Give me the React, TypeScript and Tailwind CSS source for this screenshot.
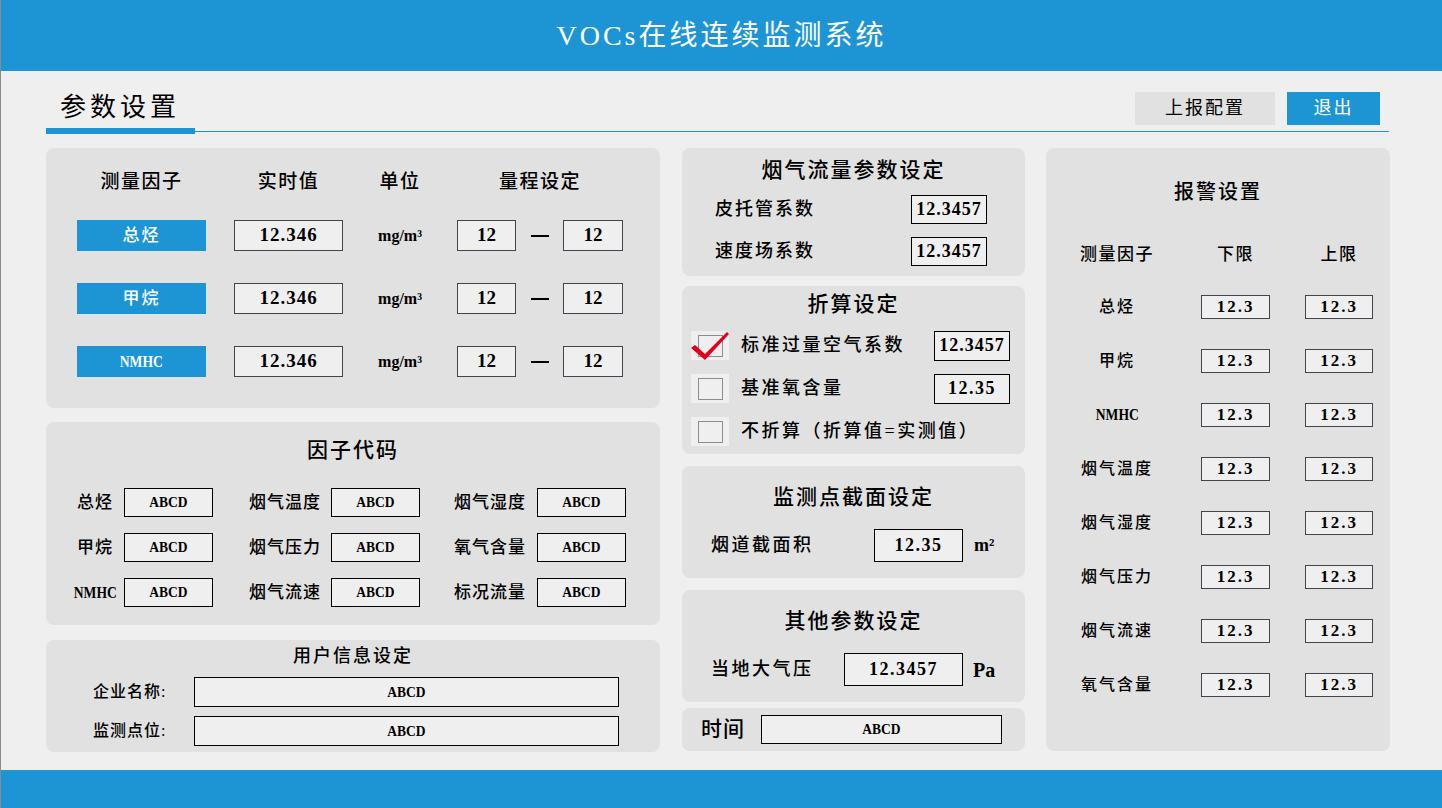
import React from "react";

const BLUE = "bg-[#1d95d4]";

function NumBox({ children, className = "" }: { children: React.ReactNode; className?: string }) {
  return (
    <div
      className={`flex items-center justify-center border border-[#43434f] bg-[#efefef] font-bold ${className}`}
    >
      {children}
    </div>
  );
}

function CodeBox({ className = "", children = "ABCD" }: { className?: string; children?: React.ReactNode }) {
  return (
    <div
      className={`flex items-center justify-center border border-black bg-[#efefef] text-[15px] font-bold tracking-normal ${className}`}
    >
      <span className="inline-block scale-x-90">{children}</span>
    </div>
  );
}

function Panel({ className = "", children }: { className?: string; children: React.ReactNode }) {
  return <div className={`rounded-[8px] bg-[#e1e1e1] ${className}`}>{children}</div>;
}

function CheckBox({ checked = false }: { checked?: boolean }) {
  return (
    <div className="relative flex h-[29px] w-[38px] flex-none items-center justify-center bg-[#efefef]">
      <div className="h-[22px] w-[25px] border border-[#8c8c8c] bg-[#efefef]" />
      {checked && (
        <svg className="absolute left-0 top-0 overflow-visible" width="40" height="30" viewBox="0 0 40 30">
          <polygon points="0,17 4,14 14,23 36,1 38,3 14,29" fill="#e3001b" />
        </svg>
      )}
    </div>
  );
}

const measureRows = ["总烃", "甲烷", "NMHC"];

const codeRows = [
  ["总烃", "烟气温度", "烟气湿度"],
  ["甲烷", "烟气压力", "氧气含量"],
  ["NMHC", "烟气流速", "标况流量"],
];

const alarmRows = ["总烃", "甲烷", "NMHC", "烟气温度", "烟气湿度", "烟气压力", "烟气流速", "氧气含量"];

function Label({ text, className = "" }: { text: string; className?: string }) {
  const latin = /^[A-Z]+$/.test(text);
  return (
    <div className={className}>
      {latin ? (
        <span className="inline-block scale-x-85 text-[16px] font-bold tracking-normal">{text}</span>
      ) : (
        text
      )}
    </div>
  );
}

export default function App() {
  return (
    <div className="flex h-[808px] w-full flex-col border-l border-[#8a8a8a] bg-[#efefef] font-['Liberation_Serif','Noto_Sans_CJK_SC',serif] font-medium text-black">
      {/* header */}
      <div className={`flex h-[71px] items-center justify-center ${BLUE} text-[28px] font-normal tracking-[3px] text-white`}>
        VOCs在线连续监测系统
      </div>

      <div className="flex-1">
        {/* page title */}
        <div className="ml-[45px] mr-[53px] pt-[21px]">
          <div className="flex h-[36px] items-start justify-between">
            <div className="pl-[14px] text-[26px] font-normal leading-[32px] tracking-[4px]">参数设置</div>
            <div className="mr-[9px] flex gap-[12px]">
              <button className="h-[33px] w-[140px] bg-[#e1e1e1] text-[18px] font-normal tracking-[2px]">上报配置</button>
              <button className={`h-[33px] w-[93px] ${BLUE} text-[18px] font-normal tracking-[2px] text-white`}>退出</button>
            </div>
          </div>
          <div className="flex h-[6px]">
            <div className={`w-[149px] ${BLUE}`} />
            <div className={`mt-[3px] h-px flex-1 ${BLUE}`} />
          </div>
        </div>

        {/* content */}
        <div className="ml-[45px] mt-[14px] flex">
          {/* left column */}
          <div className="flex w-[614px] flex-col">
            <Panel className="h-[260px] pl-[31px] pt-[22px]">
              <div className="flex h-[24px] items-center text-[19px] tracking-[1.5px]">
                <div className="w-[129px] text-center">测量因子</div>
                <div className="ml-[28px] w-[109px] text-center">实时值</div>
                <div className="w-[114px] text-center">单位</div>
                <div className="w-[166px] text-center">量程设定</div>
              </div>
              <div className="mt-[26px] flex flex-col gap-[32px]">
                {measureRows.map((name) => (
                  <div key={name} className="flex h-[31px] items-center">
                    <Label
                      text={name}
                      className={`flex h-full w-[129px] items-center justify-center ${BLUE} text-[17px] tracking-[2px] text-white`}
                    />
                    <NumBox className="ml-[28px] h-full w-[109px] text-[19px] tracking-[1px]">12.346</NumBox>
                    <div className="w-[114px] text-center text-[16px] font-bold">mg/m³</div>
                    <NumBox className="h-full w-[59px] text-[19px]">12</NumBox>
                    <div className="flex w-[47px] justify-center">
                      <div className="h-[2px] w-[18px] bg-black" />
                    </div>
                    <NumBox className="h-full w-[60px] text-[19px]">12</NumBox>
                  </div>
                ))}
              </div>
            </Panel>

            <Panel className="mt-[14px] h-[203px] pt-[13px]">
              <div className="h-[30px] text-center text-[21px] leading-[30px] tracking-[2px]">因子代码</div>
              <div className="mt-[23px] flex flex-col gap-[16px]">
                {codeRows.map((row) => (
                  <div key={row[0]} className="flex h-[29px] items-center pl-[24px] text-[17px] tracking-[1px]">
                    <Label text={row[0]} className="w-[50px] text-center" />
                    <CodeBox className="ml-[4px] h-full w-[89px]" />
                    <div className="ml-[32px] w-[80px] text-center">{row[1]}</div>
                    <CodeBox className="ml-[6px] h-full w-[89px]" />
                    <div className="ml-[30px] w-[80px] text-center">{row[2]}</div>
                    <CodeBox className="ml-[7px] h-full w-[89px]" />
                  </div>
                ))}
              </div>
            </Panel>

            <Panel className="mt-[15px] h-[112px] pt-[3px]">
              <div className="h-[26px] text-center text-[18px] leading-[26px] tracking-[2px]">用户信息设定</div>
              <div className="mt-[8px] flex flex-col gap-[9px]">
                {["企业名称:", "监测点位:"].map((l) => (
                  <div key={l} className="flex h-[30px] items-center pl-[47px]">
                    <div className="w-[101px] text-[16px] tracking-[1px]">{l}</div>
                    <CodeBox className="h-full w-[425px]" />
                  </div>
                ))}
              </div>
            </Panel>
          </div>

          {/* middle column */}
          <div className="ml-[22px] flex w-[343px] flex-col">
            <Panel className="h-[128px] pt-[7px]">
              <div className="h-[30px] text-center text-[21px] leading-[30px] tracking-[2px]">烟气流量参数设定</div>
              <div className="mt-[10px] flex flex-col gap-[13px]">
                {["皮托管系数", "速度场系数"].map((l) => (
                  <div key={l} className="flex h-[29px] items-center pl-[33px] pr-[38px]">
                    <div className="flex-1 text-[18px] tracking-[2px]">{l}</div>
                    <NumBox className="h-full w-[76px] border-black text-[18px] tracking-[1px]">12.3457</NumBox>
                  </div>
                ))}
              </div>
            </Panel>

            <Panel className="mt-[10px] h-[168px] pt-[3px]">
              <div className="h-[30px] text-center text-[21px] leading-[30px] tracking-[2px]">折算设定</div>
              <div className="mt-[12px] flex flex-col gap-[14px]">
                <div className="flex h-[29px] items-center pl-[9px] pr-[15px]">
                  <CheckBox checked />
                  <div className="ml-[12px] flex-1 text-[18px] tracking-[2.5px]">标准过量空气系数</div>
                  <NumBox className="h-[30px] w-[76px] border-black text-[18px] tracking-[1px]">12.3457</NumBox>
                </div>
                <div className="flex h-[29px] items-center pl-[9px] pr-[15px]">
                  <CheckBox />
                  <div className="ml-[12px] flex-1 text-[18px] tracking-[2.5px]">基准氧含量</div>
                  <NumBox className="h-[30px] w-[76px] border-black text-[18px] tracking-[1.5px]">12.35</NumBox>
                </div>
                <div className="flex h-[29px] items-center pl-[9px] pr-[15px]">
                  <CheckBox />
                  <div className="ml-[12px] flex-1 text-[18px] tracking-[2.5px]">不折算（折算值=实测值）</div>
                </div>
              </div>
            </Panel>

            <Panel className="mt-[12px] h-[112px] pt-[16px]">
              <div className="h-[30px] text-center text-[21px] leading-[30px] tracking-[2px]">监测点截面设定</div>
              <div className="mt-[17px] flex h-[33px] items-center pl-[29px]">
                <div className="flex-1 text-[18px] tracking-[2.5px]">烟道截面积</div>
                <NumBox className="h-full w-[89px] border-black text-[18px] tracking-[1.5px]">12.35</NumBox>
                <div className="ml-[11px] w-[51px] text-[18px] font-bold">m²</div>
              </div>
            </Panel>

            <Panel className="mt-[12px] h-[112px] pt-[16px]">
              <div className="h-[30px] text-center text-[21px] leading-[30px] tracking-[2px]">其他参数设定</div>
              <div className="mt-[17px] flex h-[33px] items-center pl-[29px]">
                <div className="flex-1 text-[18px] tracking-[2.5px]">当地大气压</div>
                <NumBox className="h-full w-[119px] border-black text-[18px] tracking-[1.5px]">12.3457</NumBox>
                <div className="ml-[10px] w-[52px] text-[20px] font-bold">Pa</div>
              </div>
            </Panel>

            <Panel className="mt-[6px] flex h-[43px] items-center pl-[19px]">
              <div className="w-[44px] flex-none whitespace-nowrap text-[21px] tracking-[1px]">时间</div>
              <CodeBox className="ml-[16px] h-[29px] w-[241px] flex-none border-[#43434f]" />
            </Panel>
          </div>

          {/* right column */}
          <Panel className="ml-[21px] h-[603px] w-[344px] pt-[29px]">
            <div className="h-[30px] text-center text-[20px] leading-[30px] tracking-[2px]">报警设置</div>
            <div className="mt-[36px] flex h-[24px] items-center pl-[10px] text-[17px] tracking-[1.5px]">
              <div className="w-[122px] text-center">测量因子</div>
              <div className="ml-[23px] w-[69px] text-center">下限</div>
              <div className="ml-[35px] w-[68px] text-center">上限</div>
            </div>
            <div className="mt-[28px] flex flex-col gap-[30px]">
              {alarmRows.map((name) => (
                <div key={name} className="flex h-[24px] items-center pl-[10px]">
                  <Label text={name} className="w-[122px] text-center text-[16px] tracking-[2px]" />
                  <NumBox className="ml-[23px] h-full w-[69px] text-[17px] tracking-[2px]">12.3</NumBox>
                  <NumBox className="ml-[35px] h-full w-[68px] text-[17px] tracking-[2px]">12.3</NumBox>
                </div>
              ))}
            </div>
          </Panel>
        </div>
      </div>

      {/* footer */}
      <div className={`h-[38px] ${BLUE}`} />
    </div>
  );
}
